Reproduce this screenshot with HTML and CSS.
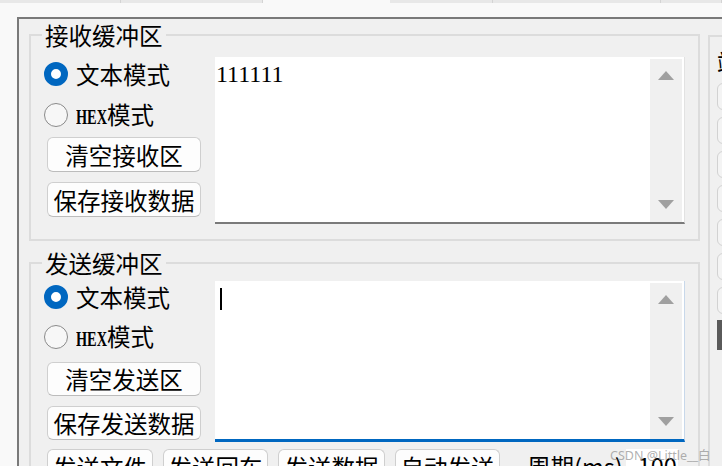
FILE: index.html
```html
<!DOCTYPE html>
<html lang="zh-CN">
<head>
  <meta charset="UTF-8">
  <title>串口助手</title>
  <link rel="stylesheet" href="styles.css">
</head>
<body>
  <div class="tabs">
    <span class="tab t1"></span><span class="tab t2"></span><span class="tab-gap"></span><span class="tab t3"></span><span class="tab t4"></span><span class="tab t5"></span>
  </div>

  <div class="frame">
    <div class="left">
      <!-- receive buffer -->
      <fieldset class="group recv">
        <legend>接收缓冲区</legend>
        <div class="body">
          <div class="opts">
            <label class="radio checked"><span class="dot"></span><span>文本模式</span></label>
            <label class="radio"><span class="dot"></span><span><span class="hex">HEX</span>模式</span></label>
            <button class="btn">清空接收区</button>
            <button class="btn">保存接收数据</button>
          </div>
          <div class="textbox">
            <div class="text">111111</div>
            <div class="scroll"><span class="up"></span><span class="down"></span></div>
          </div>
        </div>
      </fieldset>

      <!-- send buffer -->
      <fieldset class="group send">
        <legend>发送缓冲区</legend>
        <div class="body">
          <div class="opts">
            <label class="radio checked"><span class="dot"></span><span>文本模式</span></label>
            <label class="radio"><span class="dot"></span><span><span class="hex">HEX</span>模式</span></label>
            <button class="btn">清空发送区</button>
            <button class="btn">保存发送数据</button>
          </div>
          <div class="textbox focus">
            <div class="text"><span class="caret"></span></div>
            <div class="scroll"><span class="up"></span><span class="down"></span></div>
          </div>
        </div>
        <div class="actions">
          <button class="btn w106">发送文件</button>
          <button class="btn w105">发送回车</button>
          <button class="btn w107">发送数据</button>
          <button class="btn w105">自动发送</button>
          <span class="period">周期(ms)</span>
          <span class="input">100</span>
        </div>
      </fieldset>
    </div>

    <fieldset class="side">
      <div class="side-label">端口号</div>
      <button class="sbtn">打开串口</button>
      <button class="sbtn">关闭串口</button>
      <button class="sbtn">刷新串口</button>
      <button class="sbtn">波特率</button>
      <button class="sbtn">数据位</button>
      <button class="sbtn">停止位</button>
      <button class="sbtn">校验位</button>
      <div class="dark"></div>
    </fieldset>
  </div>

  <div class="watermark">CSDN @Little__白</div>
</body>
</html>
```

FILE: styles.css
```css
* {
    box-sizing: border-box;
    margin: 0;
    padding: 0;
}
html, body {
    width: 722px;
    height: 466px;
    overflow: hidden;
}
body {
    position: relative;
    background: #f9f9f9;
    font-family: "Noto Sans CJK SC", "Noto Sans", sans-serif;
    font-size: 23.5px;
    color: #000;
}

/* tab strip cut off at the top */
.tabs {
    display: flex;
    height: 3px;
}
.tab {
    background: #e8e8e8;
    border-right: 1px solid #d4d4d4;
}
.t1 { width: 121px; }
.t2 { width: 142px; }
.tab-gap { width: 127px; }
.t3 { width: 103px; }
.t4 { width: 168px; }
.t5 { width: 61px; }

.frame {
    display: flex;
    align-items: flex-start;
    margin: 14px 0 0 17px;
    width: 760px;
    height: 460px;
    background: #f0f0f0;
    border-top: 2px solid #7a7a7a;
    border-left: 2px solid #7a7a7a;
}
.left {
    margin-left: 10px;
    width: 671px;
    flex-shrink: 0;
}

/* group boxes */
.group {
    min-width: 0;
    border: 2px solid #dcdcdc;
    padding: 10px 13px 15px 13px;
}
.group legend {
    margin-left: -2px;
    padding: 0 3px;
    height: 24px;
    line-height: 24px;
}
.recv {
    margin-top: 4px;
}
.send {
    margin-top: 10px;
    padding-top: 6px;
    height: 240px;
}
.body {
    display: flex;
}
.opts {
    width: 171px;
    display: flex;
    flex-direction: column;
    align-items: flex-start;
}

.radio {
    display: flex;
    align-items: center;
    gap: 8px;
    height: 24px;
    line-height: 24px;
    white-space: nowrap;
}
.radio + .radio {
    margin-top: 17px;
}
.recv .radio:first-child { margin-top: 5px; }
.send .radio:first-child { margin-top: 4px; }
.send .radio + .radio { margin-top: 16px; }

.dot {
    width: 24px;
    height: 24px;
    border-radius: 50%;
    border: 1.5px solid #8a8a8a;
    background: #f7f7f7;
    flex-shrink: 0;
}
.checked .dot {
    border: 7.5px solid #0067c0;
    background: #fff;
}
.hex {
    display: inline-block;
    width: 31px;
    font-family: "Liberation Serif", serif;
    font-weight: 700;
    font-size: 22px;
    transform: scaleX(0.65);
    transform-origin: left center;
}

.btn {
    font: inherit;
    color: #000;
    background: #fdfdfd;
    border: 1px solid #cfcfcf;
    border-bottom-color: #bcbcbc;
    border-radius: 6px;
    height: 35px;
    line-height: 24px;
    white-space: nowrap;
}
.opts .btn {
    width: 154px;
    margin: 10px 0 0 3px;
}
.send .opts .btn { height: 34px; }
.send .opts .btn:nth-of-type(1) { margin-top: 13px; }

/* text areas */
.textbox {
    display: flex;
    width: 470px;
    height: 167px;
    padding: 2px 2px 0 0;
    background: #fff;
    border-right: 1px solid #e2e2e2;
    border-bottom: 2px solid #7a7a7a;
}
.textbox.focus {
    height: 161px;
    border-right-color: #c8d8ea;
    border-bottom: 3px solid #0067c0;
}
.text {
    flex: 1;
    padding: 2px 1px;
    font-family: "Liberation Serif", serif;
    font-size: 24px;
    line-height: 26px;
}
.caret {
    display: block;
    width: 2px;
    height: 22px;
    margin: 3px 0 0 4px;
    background: #000;
}
.scroll {
    width: 32px;
    display: flex;
    flex-direction: column;
    justify-content: space-between;
    align-items: center;
    padding: 12px 0 13px;
    background: #f0f0f0;
}
.up, .down {
    width: 0;
    height: 0;
    border-left: 8px solid transparent;
    border-right: 8px solid transparent;
}
.up { border-bottom: 9px solid #a0a0a0; }
.down { border-top: 9px solid #a0a0a0; }

/* bottom button row */
.actions {
    display: flex;
    align-items: flex-start;
    gap: 10px;
    margin: 7px 0 0 3px;
    white-space: nowrap;
}
.w105 { width: 105px; }
.w106 { width: 106px; }
.w107 { width: 107px; }
.period {
    margin-left: 17px;
    line-height: 24px;
    padding-top: 5px;
}
.input {
    width: 52px;
    height: 32px;
    margin-left: -7px;
    padding: 4px 0 0 12px;
    line-height: 24px;
    background: #fff;
}

/* right-hand settings group, mostly off screen */
.side {
    flex-shrink: 0;
    width: 200px;
    height: 440px;
    margin: 16px 0 0 8px;
    padding: 13px 0 0 7px;
    border: 2px solid #dcdcdc;
}
.side-label {
    line-height: 24px;
    height: 24px;
    margin-bottom: 9px;
    white-space: nowrap;
}
.sbtn {
    display: block;
    width: 100px;
    height: 27px;
    margin-bottom: 7px;
    font: inherit;
    font-size: 16px;
    color: #000;
    background: #f4f4f4;
    border: 1px solid #d2d2d2;
    border-radius: 6px;
}
.dark {
    width: 100px;
    height: 30px;
    margin-top: -1px;
    background: #5a5a5a;
}

.watermark {
    position: absolute;
    left: 610px;
    top: 445px;
    font-family: "Noto Sans", sans-serif;
    font-size: 12.5px;
    color: rgba(150, 150, 150, 0.75);
    white-space: nowrap;
}
```
